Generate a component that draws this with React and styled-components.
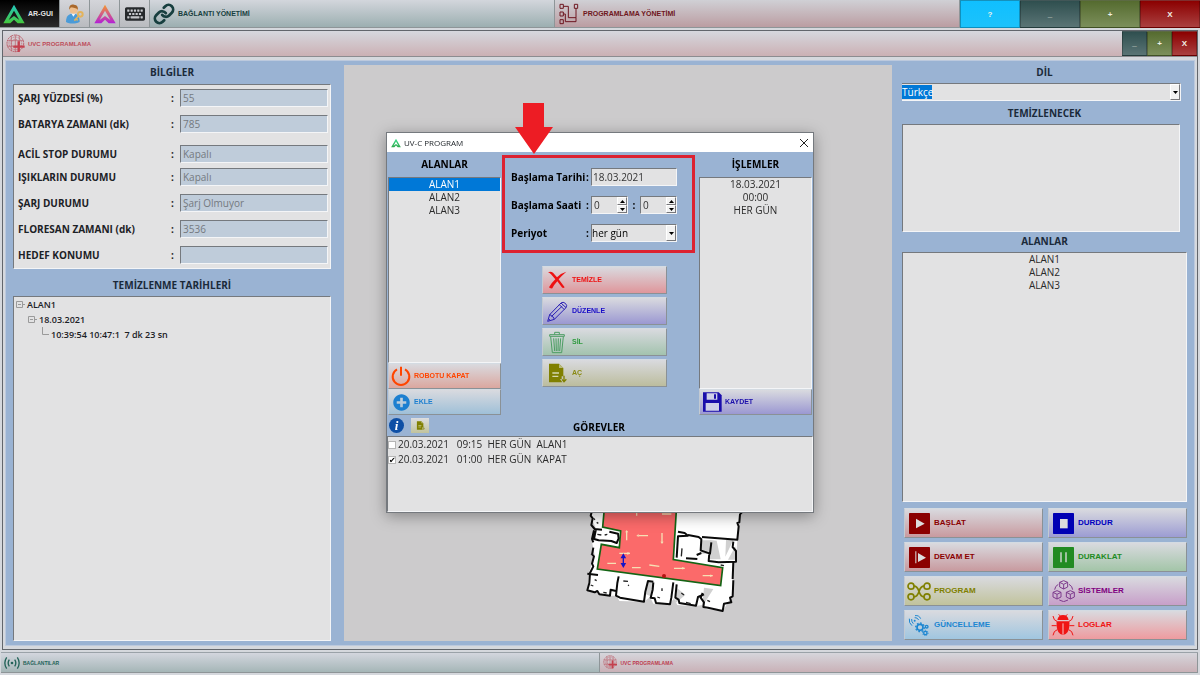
import React, { useState } from "react";
import styled, { createGlobalStyle } from "styled-components";
import { Link } from "lucide-react";
import { FaKeyboard, FaPlusCircle } from "react-icons/fa";

const GlobalStyle = createGlobalStyle`
  * {
    box-sizing: border-box;
  }

  body {
    margin: 0;
    background: #d5d8dd;
    color: #1c2126;
    font-family: "Open Sans", "Noto Sans", sans-serif;
    font-size: 10px;
    line-height: 13px;
  }

  button, input, select {
    font: inherit;
    color: inherit;
    margin: 0;
    padding: 0;
    border: 0;
    border-radius: 0;
  }

  button {
    cursor: pointer;
  }
`;

/* ---------- icons ---------- */

const LogoIcon = ({ size = 22, from = "#35e08a", to = "#2fa84e", id }) => (
  <svg width={size} height={size} viewBox="0 0 66 60" aria-hidden="true">
    <defs>
      <linearGradient id={id} x1="0" y1="0" x2="0" y2="1">
        <stop offset="0" stopColor={from} />
        <stop offset="1" stopColor={to} />
      </linearGradient>
    </defs>
    <path
      fill={`url(#${id})`}
      d="M33 2 L65 58 H44 L33 47 L22 58 H1 Z M33 20 L17 48 L33 36 L49 48 Z"
      fillRule="evenodd"
    />
  </svg>
);

const UserKeyIcon = () => (
  <svg width="20" height="20" viewBox="0 0 60 60" aria-hidden="true">
    <path d="M3 54 C3 34 12 29 25 29 C38 29 44 36 44 54 C30 60 14 60 3 54Z" fill="#4a9bd8" />
    <path d="M19 28 L25 38 L32 28Z" fill="#f3f6fa" />
    <circle cx="26" cy="17" r="12" fill="#eebf8e" />
    <path d="M13 17 C11 4 20 1 27 2 C37 3 40 9 38 18 C34 10 24 13 18 10 C16 12 15 14 13 17Z" fill="#a9682b" />
    <circle cx="46" cy="31" r="7" fill="none" stroke="#e3b35c" strokeWidth="6" />
    <path d="M41 36 L28 50 M34 45 L38 49" stroke="#e3b35c" strokeWidth="5" />
  </svg>
);

const FlowIcon = () => (
  <svg width="22" height="22" viewBox="0 0 60 66" fill="none" stroke="currentColor" strokeWidth="3" aria-hidden="true">
    <path d="M3 4h10v12H3zM46 4h10v12H46zM3 27h10v12H3zM3 50h10v12H3z" />
    <path d="M13 10h15v34h23V16M13 33h6v23h32V44" />
  </svg>
);

const UvcIcon = ({ size = 20 }) => (
  <svg width={size} height={size} viewBox="0 0 60 60" fill="none" stroke="#b95a66" aria-hidden="true">
    <circle cx="28" cy="28" r="25" strokeWidth="3" strokeDasharray="5 2" />
    <circle cx="28" cy="28" r="19" strokeWidth="2" strokeDasharray="3 2" />
    <circle cx="28" cy="28" r="12" strokeWidth="2" strokeDasharray="4 3" />
    <path d="M28 2v52M3 20h50M4 37h50M16 5v46M40 5v46" strokeWidth="2" />
    <path d="M38 22v32M22 38h34" stroke="#c4404e" strokeWidth="7" />
  </svg>
);

const SignalIcon = () => (
  <svg width="16" height="14" viewBox="0 0 48 42" fill="none" stroke="#236358" strokeWidth="4" aria-hidden="true">
    <circle cx="24" cy="21" r="4" fill="#236358" stroke="none" />
    <path d="M16 11q-7 10 0 20M32 11q7 10 0 20M8 4q-11 17 0 34M40 4q11 17 0 34" />
  </svg>
);

const PowerIcon = () => (
  <svg width="20" height="20" viewBox="0 0 60 60" fill="none" stroke="#ff4500" strokeWidth="6" aria-hidden="true">
    <path d="M18 10a25 25 0 1 0 24 0M30 2v27" />
  </svg>
);

const CrossIcon = () => (
  <svg width="20" height="18" viewBox="0 0 60 54" fill="#ee1111" aria-hidden="true">
    <path d="M3 4q8-4 15 1l12 14Q42 6 58 2 44 14 35 25l18 24q-5 4-9-1L31 31Q22 40 16 52q-7 1-10-3Q13 36 25 25L12 10Q8 6 3 4z" />
  </svg>
);

const PencilIcon = () => (
  <svg width="21" height="21" viewBox="0 0 63 63" fill="none" stroke="#2a1fb4" strokeWidth="3" strokeLinejoin="round" aria-hidden="true">
    <path d="M2 61l6-20L42 6q6-5 13 1t2 13L22 55z" />
    <path d="M8 41q5 0 6 5 6 0 8 9M37 11l15 15M42 6l15 14M14 46l32-31M4 53l6 5" />
  </svg>
);

const TrashIcon = () => (
  <svg width="20" height="23" viewBox="0 0 60 69" fill="none" stroke="#4c9d63" strokeWidth="3" aria-hidden="true">
    <path d="M8 11h44v5H8zM23 10V4h14v6M11 17l5 48h28l5-48M20 22l3 38M27 22l1 38M34 22l-1 38M41 22l-3 38" />
  </svg>
);

const FileIcon = ({ size = 20 }) => (
  <svg width={size} height={size} viewBox="0 0 60 60" aria-hidden="true">
    <path d="M6 2h30l13 13v25h-5v8h-5l7 10H6z" fill="#808000" />
    <path d="M36 2v13h13z" fill="#b9bb7f" />
    <path d="M16 30h20M16 40h18" stroke="#d4d6ae" strokeWidth="4" />
    <path d="M51 38v17M45 49l6 7 7-7" fill="none" stroke="#808000" strokeWidth="4" />
  </svg>
);

const SaveIcon = () => (
  <svg width="20" height="20" viewBox="0 0 60 60" aria-hidden="true">
    <path d="M3 1h47l9 9v49H3z" fill="#1a0dab" />
    <path d="M14 4h32v19H14zM11 33h40v23H11z" fill="#cfcfe8" />
    <path d="M36 7h6v13h-6z" fill="#1a0dab" />
  </svg>
);

const SquareIcon = ({ color, children }) => (
  <svg width="21" height="21" viewBox="0 0 63 63" aria-hidden="true">
    <rect width="63" height="63" rx="2" fill={color} />
    {children}
  </svg>
);

const NodesIcon = () => (
  <svg width="24" height="19" viewBox="0 0 72 56" fill="none" stroke="#808000" strokeWidth="5" aria-hidden="true">
    <circle cx="12" cy="12" r="9" />
    <circle cx="60" cy="12" r="9" />
    <circle cx="12" cy="44" r="9" />
    <circle cx="60" cy="44" r="9" />
    <path d="M21 12q10 0 15 16t15 16M51 12q-10 0-15 16T21 44" />
  </svg>
);

const cube = "m0-12 12 5v14l-12 6-12-6v-14zm-12 5 12 6 12-6m-12 6v14";

const CubesIcon = () => (
  <svg width="23" height="22" viewBox="0 0 69 66" fill="none" stroke="#7d3a8c" strokeWidth="3" strokeLinejoin="round" aria-hidden="true">
    <path d={`M35 14${cube}`} />
    <path d={`M15 44${cube}`} />
    <path d={`M55 44${cube}`} />
    <path d="M19 13Q9 18 8 29M51 13q10 5 11 16M22 60l13 5 13-5" />
  </svg>
);

const GearsIcon = () => (
  <svg width="22" height="22" viewBox="0 0 66 66" fill="none" stroke="#1c86d1" aria-hidden="true">
    <path d="M4 14q-2 13 8 21M11 15q-1 8 5 14M21 5q12-2 17 9M20 11q8-1 12 7" strokeWidth="3" />
    <circle cx="20" cy="20" r="3" fill="#1c86d1" stroke="none" />
    <circle cx="36" cy="40" r="9" strokeWidth="5" />
    <circle cx="36" cy="40" r="13" strokeWidth="4" strokeDasharray="5 5" />
    <circle cx="56" cy="38" r="4" strokeWidth="4" />
    <circle cx="52" cy="57" r="5" strokeWidth="4" />
    <circle cx="52" cy="57" r="8" strokeWidth="3" strokeDasharray="3 3" />
  </svg>
);

const BugIcon = () => (
  <svg width="24" height="22" viewBox="0 0 72 66" aria-hidden="true">
    <g fill="none" stroke="#f01414" strokeWidth="3">
      <path d="M18 22Q8 20 6 6M54 22q10-2 12-16M17 35H2M55 35h15M19 47Q8 50 6 64M53 47q11 3 13 17M28 6l-5-5M44 6l5-5" />
    </g>
    <path d="M19 18Q22 3 36 3t17 15z" fill="#f01414" />
    <path d="M17 22h38q2 20-5 32-6 9-14 9t-14-9q-7-12-5-32z" fill="#f01414" />
    <path d="M36 28v34" stroke="#f5c4c6" strokeWidth="3" />
  </svg>
);

const CloseIcon = () => (
  <svg width="8" height="8" viewBox="0 0 8 8" stroke="#222" aria-hidden="true">
    <path d="M0 0l8 8M8 0L0 8" />
  </svg>
);

const TriangleIcon = ({ up }) => (
  <svg width="5" height="3" viewBox="0 0 5 3" aria-hidden="true">
    <path d={up ? "M0 3L2.500 0L5 3z" : "M0 0h5L2.500 3z"} />
  </svg>
);

const FloorPlan = () => (
  <svg width="190" height="115" viewBox="0 0 570 345" aria-hidden="true">
    <path
      d="M66 0 L62 35 L78 70 L66 110 L74 150 L58 200 L52 258 L120 272 L140 272 L148 288 L222 290 L240 276 L250 296 L300 296 L312 280 L322 300 L372 304 L398 300 L408 312 L458 318 L486 274 L488 170 L498 168 L502 105 L514 0Z"
      fill="#fff"
    />
    <path d="M420 105l20 2 12 56-34 0zM468 105l22 0-24 50zM496 124l4 40-26 0zM394 106h30l-8 40h-24zM234 230l18 4-10 40-14-6zM402 248l28 4-34 54zM322 250l24 20-32 26z" fill="#d0d0d0" />
    <path d="M104 0L98 66l54 12-4 50-54-10-12 74 370 50 6-54-148-24L320 0z" fill="#fb6a6a" stroke="#146414" strokeWidth="5" />
    <g fill="none" stroke="#0a0a0a" strokeWidth="6" strokeLinejoin="round">
      <path d="M66 18l-4 14 6 8-4 20 10 12 22 2M78 72l-6 30 14 4 38 2 16 6 6-14-2-14-26-6M72 76l-6 26 4 10M70 128l-4 22M64 146l8 8-6 22 4 8-10 20-2 30-6 22 22 6 8-4 6 10 32 4 2-18 16 4M52 206l32 4" />
      <path d="M146 214l-4 20-4 38 12 6 72 12 4-30 8-32 16 2M250 232l-2 22-6 24 12 2 4 14 42 4 4-20 6-46M320 238l-4 40 10 6 2 10 50 8 6-26 18-8M398 264l-6 14 10 14-2 14 14 2 44 10 4-22 22-4-4-14 8-4 2-48M490 170l-2 52" />
      <path d="M324 80l20 4 10 8-30 2-4 64M354 90l32 6 10 8M396 96l106 8 4-40-4-10 6-2 2-24 8-8M394 104l-2 32 28 10 4-34M418 144l-2 24 30 4 52-2 0-32-10-12 2-16M380 150l14-6M348 160l34 2" />
    </g>
    <g fill="none" stroke="#222" strokeWidth="4">
      <path d="M70 40l5 4M80 52l5 3M82 88l12 2M104 90l8-2M74 224l6 3M62 240l8 3M100 262l10 2M160 228l14 1M174 240l3 2M276 250v8M262 276l8 3M334 264l8 6M348 292l14 4M412 286l8 4M452 180l10 2M336 130l-2 24" />
    </g>
    <g stroke="#f6dfb4" strokeWidth="4" fill="#f6dfb4">
      <path d="M170 78v28M206 92h28M276 84v30M148 145h32M112 175h26M186 188h26M238 180l30 4M312 190h32M398 212h30M200 22v10M276 27h28" />
      <path d="M172 142l8 3-8 4M206 88l-6 4 6 3M166 82l4-6 4 6M272 110l4 6 4-6M336 187l8 3-8 3M420 209l8 3-8 3" strokeWidth="1" />
    </g>
    <path d="M160 152v30M155 158l5-9 5 9zM155 176l5 9 5-9z" stroke="#1414c8" strokeWidth="4" fill="#1414c8" />
    <circle cx="282" cy="213" r="6" fill="#b41414" />
  </svg>
);

/* ---------- shared parts ---------- */

const Label = styled.span`
  font-family: "Liberation Sans", Arial, sans-serif;
  font-weight: 700;
  font-size: ${(p) => p.$size || 8}px;
  line-height: 12px;
  white-space: nowrap;
`;

const Tab = styled.button`
  display: flex;
  align-items: center;
  justify-content: ${(p) => (p.$center ? "center" : "flex-start")};
  gap: 3px;
  min-width: 0;
  padding: 0 3px;
  color: ${(p) => p.$color};
  background: linear-gradient(${(p) => p.$from}, ${(p) => p.$to});
  border-right: 1px solid #8e9598;
  border-bottom: 1px solid #8e9598;
`;

const WindowButton = styled.button`
  font-family: "Liberation Sans", Arial, sans-serif;
  font-weight: 700;
  font-size: 8px;
  color: #f1f1e6;
  background: linear-gradient(${(p) => p.$from}, ${(p) => p.$to});
  border: 1px solid rgba(0, 0, 0, 0.25);
`;

const ActionButton = styled.button`
  display: grid;
  grid-template-columns: 24px 1fr;
  align-items: center;
  justify-items: center;
  column-gap: ${(p) => (p.$tight ? 1 : 3)}px;
  width: 100%;
  height: ${(p) => p.$height || 30}px;
  padding: 0 ${(p) => (p.$tight ? 0 : 2)}px;
  color: ${(p) => p.$color};
  background: linear-gradient(#d9dadf, ${(p) => p.$to});
  border: 1px solid;
  border-color: #d4dbe2 #8a9196 #8a9196 #c3cad2;

  ${Label} {
    justify-self: start;
  }
`;

const Heading = styled.h2`
  margin: 0;
  font-size: 10px;
  line-height: 14px;
  font-weight: 700;
  text-align: center;
  color: ${(p) => (p.$dark ? "#000" : "#1b2a3a")};
`;

const Sunken = styled.div`
  background: #e2e2e3;
  border: 1px solid;
  border-color: #75797e #f4f5f7 #f4f5f7 #75797e;
`;

const List = styled.ul`
  flex: 1;
  margin: 0;
  padding: 0;
  list-style: none;
  text-align: center;
  background: #e2e2e3;
  border: 1px solid;
  border-color: #75797e #f4f5f7 #f4f5f7 #75797e;
`;

const Item = styled.li`
  cursor: default;
  color: ${(p) => (p.$active ? "#fff" : "#2a2a2a")};
  background: ${(p) => (p.$active ? "#0078d7" : "transparent")};
`;

const Combo = styled.span`
  display: grid;
  flex: 1;
  min-width: 0;
  height: 18px;
  background: #e2e2e3;
  border: 1px solid;
  border-color: #75797e #f4f5f7 #f4f5f7 #75797e;

  select {
    grid-area: 1 / 1;
    appearance: none;
    outline: none;
    background: transparent;
  }
`;

const HighlightCombo = styled(Combo)`
  border-left: 0;

  select {
    color: #fff;
    background: linear-gradient(#0078d7, #0078d7) no-repeat 0 1px / 30px 14px;
  }

  option {
    color: #1c2126;
  }
`;

const ComboArrow = styled.span`
  grid-area: 1 / 1;
  justify-self: end;
  display: flex;
  align-items: center;
  justify-content: center;
  width: 10px;
  background: #f2f2f2;
  border: 1px solid;
  border-color: #fff #77777a #77777a #fff;
  pointer-events: none;
`;

/* ---------- shell ---------- */

const Page = styled.div`
  display: flex;
  flex-direction: column;
  min-height: 100vh;
`;

const TopBar = styled.header`
  display: grid;
  grid-template-columns: 60px repeat(3, 30px) 1fr 1fr repeat(4, 60px);
  height: 28px;
`;

const AppWindow = styled.section`
  flex: 1;
  display: flex;
  flex-direction: column;
  margin: 2px;
  border: 1px solid #62666c;
`;

const TitleBar = styled.div`
  display: grid;
  grid-template-columns: 1fr repeat(3, 25px);
  height: 26px;
  background: linear-gradient(#d6d8de, #cbb0b4);
  border-bottom: 1px solid #8c8c90;
`;

const Title = styled.h1`
  display: flex;
  align-items: center;
  gap: 2px;
  margin: 0;
  padding-left: 3px;
  color: #bd4c59;
  font-size: 7px;
`;

const Workspace = styled.main`
  flex: 1;
  display: grid;
  grid-template-columns: 318px 1fr 285px;
  padding: 4px 7px;
  margin: 3px 2px;
  background: #9ab3d3;
  border: 1px solid #bcc9dd;
`;

const Column = styled.div`
  display: flex;
  flex-direction: column;
`;

const MapPanel = styled.div`
  display: flex;
  align-items: flex-end;
  justify-content: center;
  margin: 0 10px 0 13px;
  padding: 0 0 21px 94px;
  background: #cccbcc;
`;

const StatusBar = styled.footer`
  display: grid;
  grid-template-columns: 1fr 1fr;
  height: 21px;
  margin: 0 2px 2px 1px;
  border-top: 1px solid #9aa2a8;
`;

/* ---------- left column ---------- */

const InfoPanel = styled(Sunken)`
  margin: 5px 0 9px;
  padding: 4px 2px 4px 4px;
`;

const InfoRow = styled.label`
  display: grid;
  grid-template-columns: 1fr 9px 148px;
  align-items: center;
  margin-top: ${(p) => p.$gap}px;
  font-size: 10px;
  font-weight: 700;

  input {
    width: 100%;
    height: 18px;
    padding: 0 2px;
    color: #74797f;
    font-weight: 400;
    background: #bfccda;
    border: 1px solid;
    border-color: #75797e #f4f5f7 #f4f5f7 #75797e;
  }
`;

const TreePanel = styled(Sunken)`
  flex: 1;
  margin-top: 4px;
  padding-left: 2px;

  ul {
    margin: 0;
    padding: 0;
    list-style: none;
    font-weight: 600;
    line-height: 15px;
  }

  ul ul {
    padding-left: 12px;
  }
`;

const TreeNode = styled.div`
  display: flex;
  align-items: center;
  gap: 2px;
  font-size: 9px;
  white-space: pre;
`;

const info = [
  { label: "ŞARJ YÜZDESİ (%)", value: "55", gap: 0 },
  { label: "BATARYA ZAMANI (dk)", value: "785", gap: 8 },
  { label: "ACİL STOP DURUMU", value: "Kapalı", gap: 12 },
  { label: "IŞIKLARIN DURUMU", value: "Kapalı", gap: 5 },
  { label: "ŞARJ DURUMU", value: "Şarj Olmuyor", gap: 8 },
  { label: "FLORESAN ZAMANI (dk)", value: "3536", gap: 8 },
  { label: "HEDEF KONUMU", value: "", gap: 8 },
];

const TreeMark = ({ leaf }) => (
  <svg width="9" height="15" viewBox="0 0 9 15" fill="none" stroke="#9a9a9a" aria-hidden="true">
    {leaf ? <path d="M2.500 0v7.500H9" /> : <path d="M.5 4.500h6v6h-6zM2 7.500h3M7 7.500h2" />}
  </svg>
);

const LeftColumn = () => (
  <Column>
    <Heading>BİLGİLER</Heading>
    <InfoPanel>
      {info.map((row) => (
        <InfoRow key={row.label} $gap={row.gap}>
          <span>{row.label}</span>
          <span>:</span>
          <input value={row.value} readOnly />
        </InfoRow>
      ))}
    </InfoPanel>
    <Heading>TEMİZLENME TARİHLERİ</Heading>
    <TreePanel>
      <ul>
        <li>
          <TreeNode><TreeMark />ALAN1</TreeNode>
          <ul>
            <li>
              <TreeNode><TreeMark />18.03.2021</TreeNode>
              <ul>
                <li>
                  <TreeNode><TreeMark leaf />{"10:39:54 10:47:1  7 dk 23 sn"}</TreeNode>
                </li>
              </ul>
            </li>
          </ul>
        </li>
      </ul>
    </TreePanel>
  </Column>
);

/* ---------- right column ---------- */

const LanguageRow = styled.div`
  display: flex;
  margin: 4px 6px 5px 0;
`;

const QueueBox = styled(Sunken)`
  height: 108px;
  margin: 4px 7px 2px 0;
`;

const AreaList = styled(List)`
  margin: 4px 0 6px;
`;

const Actions = styled.div`
  display: grid;
  grid-template-columns: 1fr 1fr;
  gap: 4px 5px;
  margin: 0 0 1px 2px;
`;

const RightColumn = () => (
  <Column>
    <Heading as="label" htmlFor="language">DİL</Heading>
    <LanguageRow>
      <HighlightCombo>
        <select id="language" defaultValue="tr">
          <option value="tr">Türkçe</option>
        </select>
        <ComboArrow><TriangleIcon /></ComboArrow>
      </HighlightCombo>
    </LanguageRow>
    <Heading>TEMİZLENECEK</Heading>
    <QueueBox />
    <Heading>ALANLAR</Heading>
    <AreaList>
      <Item>ALAN1</Item>
      <Item>ALAN2</Item>
      <Item>ALAN3</Item>
    </AreaList>
    <Actions>
      <ActionButton $color="#8b0000" $to="#c89a9f">
        <SquareIcon color="#8b0000"><path d="M21 17l26 15-26 14z" fill="#ddd" /></SquareIcon>
        <Label>BAŞLAT</Label>
      </ActionButton>
      <ActionButton $color="#0000c0" $to="#9c9cd3">
        <SquareIcon color="#0000b4"><path d="M21 18h23v28H21z" fill="#ddd" /></SquareIcon>
        <Label>DURDUR</Label>
      </ActionButton>
      <ActionButton $color="#8b0000" $to="#c89a9f">
        <SquareIcon color="#8b0000"><path d="M27 18l24 14-24 13zM19 13h3v36h-3z" fill="#ddd" /></SquareIcon>
        <Label>DEVAM ET</Label>
      </ActionButton>
      <ActionButton $color="#228b22" $to="#a3c5a8">
        <SquareIcon color="#228b22"><path d="M22 16h4v30h-4zM37 16h4v30h-4z" fill="#ddd" /></SquareIcon>
        <Label>DURAKLAT</Label>
      </ActionButton>
      <ActionButton $color="#808000" $to="#c1c39c">
        <NodesIcon />
        <Label>PROGRAM</Label>
      </ActionButton>
      <ActionButton $color="#800080" $to="#c79fc9">
        <CubesIcon />
        <Label>SİSTEMLER</Label>
      </ActionButton>
      <ActionButton $color="#1c86d1" $to="#a0c6e0">
        <GearsIcon />
        <Label>GÜNCELLEME</Label>
      </ActionButton>
      <ActionButton $color="#f01414" $to="#ee9b9f">
        <BugIcon />
        <Label>LOGLAR</Label>
      </ActionButton>
    </Actions>
  </Column>
);

/* ---------- program dialog ---------- */

const Overlay = styled.div`
  position: fixed;
  inset: 0;
  display: flex;
  align-items: center;
  justify-content: center;
  padding-bottom: 30px;
  pointer-events: none;
`;

const Dialog = styled.section`
  width: 428px;
  background: #9ab3d3;
  border: 1px solid #75797e;
  box-shadow: 0 3px 14px rgba(0, 0, 0, 0.35);
  pointer-events: auto;
`;

const DialogBar = styled.div`
  display: flex;
  align-items: center;
  gap: 3px;
  height: 19px;
  padding: 0 5px 0 4px;
  font-size: 8px;
  background: #fff;

  button {
    display: flex;
    margin-left: auto;
    background: transparent;
  }
`;

const DialogBody = styled.div`
  display: grid;
  grid-template-columns: 113px minmax(0, 1fr) 113px;
  height: 263px;
  padding: 0 1px;
`;

const DialogColumn = styled.div`
  display: flex;
  flex-direction: column;
  align-items: stretch;
  padding-top: ${(p) => p.$top || 0}px;

  ${Heading} {
    margin: 5px 0 6px;
  }
`;

const Highlight = styled.fieldset`
  position: relative;
  display: flex;
  flex-direction: column;
  gap: 10px;
  min-width: 0;
  margin: 0 4px 13px 1px;
  padding: 10px 15px 8px 6px;
  border: 3px solid #dc2231;
`;

const Pointer = styled.svg`
  position: absolute;
  left: 10px;
  bottom: 100%;
  width: 38px;
  height: 51px;
  margin-bottom: 4px;
`;

const Field = styled.div`
  display: flex;
  align-items: center;
  height: 18px;
  color: #000;

  > label {
    width: 75px;
    font-weight: 700;
    white-space: nowrap;
  }

  > b {
    width: 5px;
  }
`;

const DateInput = styled.input`
  flex: 1;
  min-width: 0;
  height: 18px;
  padding: 0 1px;
  color: #333;
  background: #e2e2e3;
  border: 1px solid;
  border-color: #75797e #f4f5f7 #f4f5f7 #75797e;
`;

const Spinner = styled.span`
  display: grid;
  grid-template-columns: minmax(0, 1fr) 10px;
  grid-template-rows: 1fr 1fr;
  width: 37px;
  height: 18px;
  background: #e2e2e3;
  border: 1px solid;
  border-color: #75797e #f4f5f7 #f4f5f7 #75797e;

  input {
    grid-row: 1 / 3;
    min-width: 0;
    padding: 0 2px;
    color: #333;
    background: transparent;
  }

  button {
    display: flex;
    align-items: center;
    justify-content: center;
    background: #f2f2f2;
    border: 1px solid;
    border-color: #fff #77777a #77777a #fff;
  }
`;

const SpinnerColon = styled.b`
  flex: 1;
  text-align: center;
`;

const Commands = styled.div`
  display: flex;
  flex-direction: column;
  gap: 3px;
  margin: 0 32px 0 41px;
`;

const DialogFooter = styled.div`
  display: grid;
  grid-template-columns: 18px 18px 1fr 42px;
  align-items: center;
  gap: 4px;
  height: 21px;
  padding: 0 2px;

  ${Heading} {
    align-self: end;
    padding-bottom: 2px;
  }
`;

const InfoButton = styled.button`
  width: 15px;
  height: 15px;
  border-radius: 50%;
  background: #0e4fa5;
  color: #fff;
  font: italic 700 13px/13px "Liberation Serif", serif;
`;

const FileButton = styled.button`
  display: flex;
  align-items: center;
  justify-content: center;
  width: 18px;
  height: 15px;
  background: linear-gradient(#dcdde0, #c1c39c);
`;

const TaskList = styled(List)`
  height: 76px;
  text-align: left;
`;

const Task = styled.label`
  display: flex;
  align-items: center;
  gap: 2px;
  height: 15px;
  color: #2a2a2a;
  white-space: pre;

  input {
    appearance: none;
    display: grid;
    place-items: center;
    width: 8px;
    height: 8px;
    background: #fff;
    border: 1px solid #b5b5b5;
  }

  input:checked::after {
    content: "✔";
    font: 700 8px/8px "DejaVu Sans", sans-serif;
    color: #000;
  }
`;

const SpinField = ({ id, label }) => {
  const [value, setValue] = useState(0);
  return (
    <Spinner>
      <input id={id} aria-label={label} value={value} onChange={(e) => setValue(Number(e.target.value) || 0)} />
      <button type="button" aria-label={`${label} +`} onClick={() => setValue(value + 1)}><TriangleIcon up /></button>
      <button type="button" aria-label={`${label} -`} onClick={() => setValue(Math.max(0, value - 1))}><TriangleIcon /></button>
    </Spinner>
  );
};

const ProgramDialog = () => {
  const [area, setArea] = useState("ALAN1");

  return (
    <Overlay>
      <Dialog role="dialog" aria-label="UV-C PROGRAM">
        <DialogBar>
          <LogoIcon id="logo-dialog" size={10} />
          <span>UV-C PROGRAM</span>
          <button type="button" aria-label="Kapat"><CloseIcon /></button>
        </DialogBar>
        <DialogBody>
          <DialogColumn>
            <Heading $dark>ALANLAR</Heading>
            <List role="listbox" aria-label="ALANLAR">
              {["ALAN1", "ALAN2", "ALAN3"].map((name) => (
                <Item key={name} role="option" aria-selected={area === name} $active={area === name} onClick={() => setArea(name)}>
                  {name}
                </Item>
              ))}
            </List>
            <ActionButton $tight $height={26} $color="#ff4500" $to="#dba79f">
              <PowerIcon />
              <Label $size={7}>ROBOTU KAPAT</Label>
            </ActionButton>
            <ActionButton $tight $height={26} $color="#1c7fd0" $to="#9fc0d8">
              <FaPlusCircle size={17} />
              <Label $size={7}>EKLE</Label>
            </ActionButton>
          </DialogColumn>

          <DialogColumn $top={3}>
            <Highlight>
              <Pointer viewBox="0 0 38 51" aria-hidden="true">
                <path d="M8 0h21v24h9L19 51 0 24h8z" fill="#ed1c24" />
              </Pointer>
              <Field>
                <label htmlFor="start-date">Başlama Tarihi</label>
                <b>:</b>
                <DateInput id="start-date" defaultValue="18.03.2021" />
              </Field>
              <Field>
                <label htmlFor="start-hour">Başlama Saati</label>
                <b>:</b>
                <SpinField id="start-hour" label="Saat" />
                <SpinnerColon>:</SpinnerColon>
                <SpinField id="start-minute" label="Dakika" />
              </Field>
              <Field>
                <label htmlFor="period">Periyot</label>
                <b>:</b>
                <Combo>
                  <select id="period" defaultValue="daily">
                    <option value="daily">her gün</option>
                  </select>
                  <ComboArrow><TriangleIcon /></ComboArrow>
                </Combo>
              </Field>
            </Highlight>
            <Commands>
              <ActionButton $height={28} $color="#ee1111" $to="#df969b">
                <CrossIcon />
                <Label $size={7}>TEMİZLE</Label>
              </ActionButton>
              <ActionButton $height={28} $color="#1a0dc8" $to="#9b98d2">
                <PencilIcon />
                <Label $size={7}>DÜZENLE</Label>
              </ActionButton>
              <ActionButton $height={28} $color="#2e9a3e" $to="#a3c3ae">
                <TrashIcon />
                <Label $size={7}>SİL</Label>
              </ActionButton>
              <ActionButton $height={28} $color="#8a8a14" $to="#bcbd9e">
                <FileIcon />
                <Label $size={7}>AÇ</Label>
              </ActionButton>
            </Commands>
          </DialogColumn>

          <DialogColumn>
            <Heading $dark>İŞLEMLER</Heading>
            <List>
              <Item>18.03.2021</Item>
              <Item>00:00</Item>
              <Item>HER GÜN</Item>
            </List>
            <ActionButton $tight $height={26} $color="#1a0dab" $to="#9b98d2">
              <SaveIcon />
              <Label $size={7}>KAYDET</Label>
            </ActionButton>
          </DialogColumn>
        </DialogBody>
        <DialogFooter>
          <InfoButton type="button">i</InfoButton>
          <FileButton type="button" aria-label="Dosya"><FileIcon size={9} /></FileButton>
          <Heading $dark>GÖREVLER</Heading>
        </DialogFooter>
        <TaskList>
          <li><Task><input type="checkbox" />{"20.03.2021   09:15  HER GÜN  ALAN1"}</Task></li>
          <li><Task><input type="checkbox" defaultChecked />{"20.03.2021   01:00  HER GÜN  KAPAT"}</Task></li>
        </TaskList>
      </Dialog>
    </Overlay>
  );
};

export default function App() {
  return (
    <>
      <GlobalStyle />
      <Page>
        <TopBar>
          <Tab $from="#000" $to="#2b2b2b" $color="#e4e4e4">
            <LogoIcon id="logo-app" from="#22c7c0" to="#45c73c" />
            <Label $size={7}>AR-GUI</Label>
          </Tab>
          <Tab $center $from="#d4d5da" $to="#b9bbbf" aria-label="Kullanıcı"><UserKeyIcon /></Tab>
          <Tab $center $from="#d4d5da" $to="#b9bbbf" aria-label="Robot">
            <LogoIcon id="logo-robot" from="#f59a2e" to="#b21fd8" />
          </Tab>
          <Tab $center $from="#d4d5da" $to="#b9bbbf" $color="#26292c" aria-label="Klavye"><FaKeyboard size={20} /></Tab>
          <Tab $from="#d3d6dc" $to="#9cafb1" $color="#173f3f">
            <Link size={22} strokeWidth={3} />
            <Label $size={7}>BAĞLANTI YÖNETİMİ</Label>
          </Tab>
          <Tab $from="#d0d0d5" $to="#bb9da2" $color="#6e1620">
            <FlowIcon />
            <Label $size={7}>PROGRAMLAMA YÖNETİMİ</Label>
          </Tab>
          <WindowButton $from="#10bfff" $to="#1cc2fb">?</WindowButton>
          <WindowButton $from="#2f4f4f" $to="#5a7475">_</WindowButton>
          <WindowButton $from="#556b2f" $to="#7c8f5b">+</WindowButton>
          <WindowButton $from="#8b0000" $to="#aa4040">X</WindowButton>
        </TopBar>

        <AppWindow>
          <TitleBar>
            <Title>
              <UvcIcon />
              <Label $size={6}>UVC PROGRAMLAMA</Label>
            </Title>
            <WindowButton $from="#2f4f4f" $to="#5a7475">_</WindowButton>
            <WindowButton $from="#556b2f" $to="#7c8f5b">+</WindowButton>
            <WindowButton $from="#8b0000" $to="#aa4040">X</WindowButton>
          </TitleBar>
          <Workspace>
            <LeftColumn />
            <MapPanel>
              <FloorPlan />
            </MapPanel>
            <RightColumn />
          </Workspace>
        </AppWindow>

        <StatusBar>
          <Tab $from="#d3d6de" $to="#a5b6b7" $color="#236358">
            <SignalIcon />
            <Label $size={5}>BAĞLANTILAR</Label>
          </Tab>
          <Tab $from="#d6d6dc" $to="#c9b1b7" $color="#bd3c50">
            <UvcIcon size={15} />
            <Label $size={5}>UVC PROGRAMLAMA</Label>
          </Tab>
        </StatusBar>
      </Page>
      <ProgramDialog />
    </>
  );
}
